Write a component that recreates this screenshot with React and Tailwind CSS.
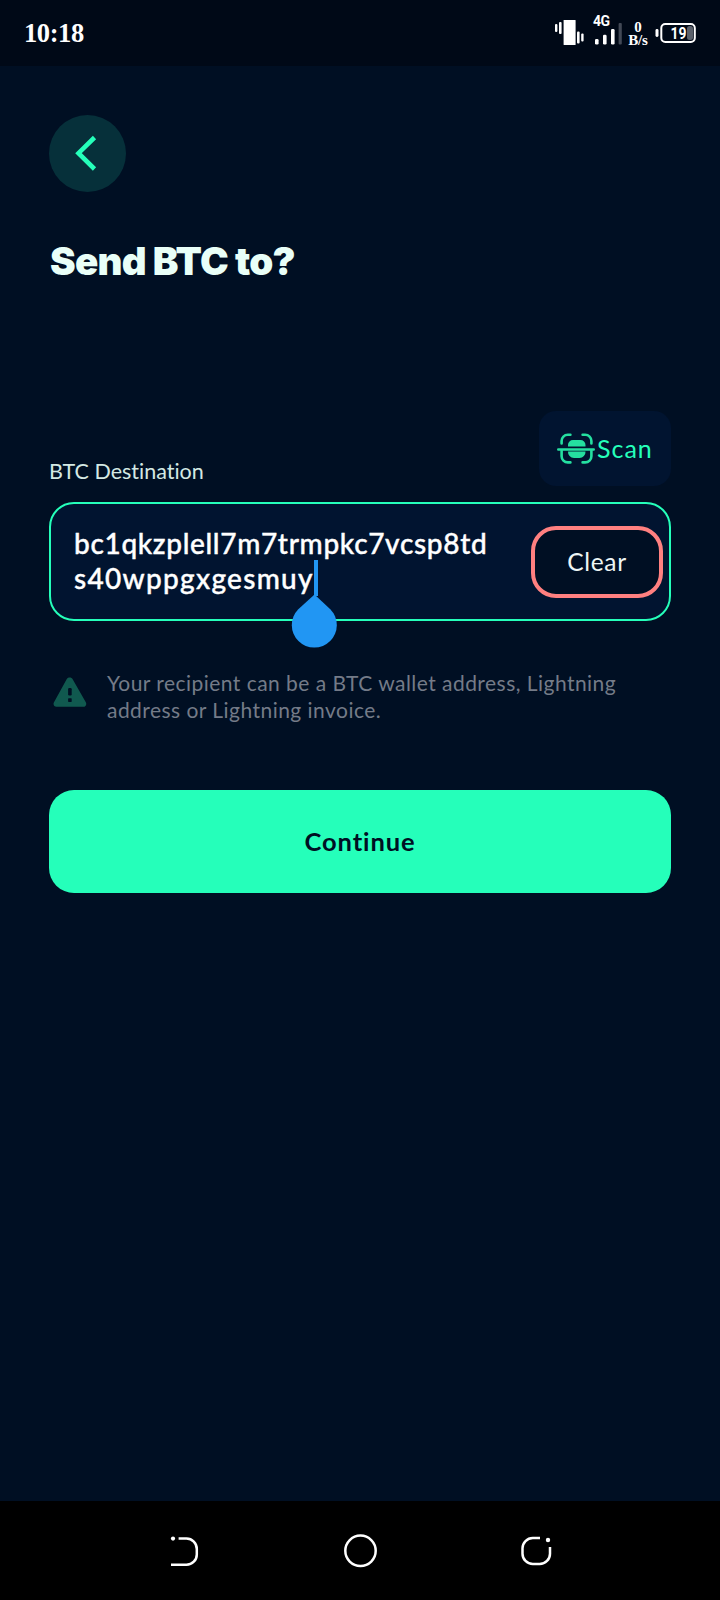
import React from 'react';

function StatusBar() {
  return (
    <header className="flex h-[66px] shrink-0 items-center justify-between bg-[#000917] pr-[24px] pl-[24px] text-white">
      <span className="pb-[1px] font-['Liberation_Serif',serif] text-[26.5px] leading-[30px] font-bold tracking-[-0.4px]">10:18</span>
      <div className="flex h-[66px] items-center">
        <svg className="mr-[8px] h-[26px] w-[30px]" viewBox="0 0 30 26" fill="#fff">
          <rect x="0" y="4" width="2.4" height="8" rx="1" />
          <rect x="4" y="2" width="2.6" height="12" rx="1" />
          <rect x="8.600" y="0" width="12" height="25" rx="0.600" />
          <rect x="22" y="11.500" width="2.600" height="12" rx="1" />
          <rect x="26.200" y="13.500" width="2.400" height="8" rx="1" />
        </svg>
        <div className="mr-[6px] flex h-[36px] w-[29px] flex-col">
          <span className="h-[13px] font-['Roboto',sans-serif] text-[14px] leading-[12px] font-bold tracking-[-0.6px]">4G</span>
          <svg className="h-[17px] w-[29px] shrink-0 overflow-visible" viewBox="0 0 29 17" fill="#fff">
            <rect x="2" y="11" width="3.600" height="5.500" rx="1.300" />
            <rect x="10" y="6.800" width="3.600" height="9.700" rx="1.300" />
            <rect x="18" y="1" width="3.600" height="15.500" rx="1.300" />
            <rect x="25.600" y="-5" width="3.200" height="21.500" rx="1" fill="#424956" />
          </svg>
        </div>
        <div className="mr-[7px] flex w-[20px] flex-col items-center pt-[2px] font-['Liberation_Serif',serif] text-[15px] leading-[13.5px] font-bold tracking-[-0.2px]">
          <span>0</span>
          <span>B/s</span>
        </div>
        <svg className="h-[22px] w-[41px]" viewBox="0 0 41 22">
          <rect x="0.500" y="7" width="3" height="8" rx="1.400" fill="#fff" />
          <rect x="6.300" y="2" width="33.500" height="18" rx="4" fill="none" stroke="#fff" strokeWidth="2" />
          <rect x="32" y="4" width="6" height="14" rx="2.500" fill="#5a606b" />
          <text x="15.500" y="17" fill="#fff" fontFamily="Roboto, sans-serif" fontSize="16.500" fontWeight="700" textLength="16" lengthAdjust="spacingAndGlyphs">19</text>
        </svg>
      </div>
    </header>
  );
}

function ScanIcon() {
  return (
    <svg className="h-[32px] w-[38px] shrink-0" viewBox="0 0 38 32" fill="none" stroke="#25dfa0" strokeWidth="2.600" strokeLinecap="round">
      <path d="M4.600 10.500V8a6.200 6.200 0 0 1 6.200-6.200h2.600M25.600 1.800h2.600A6.200 6.200 0 0 1 34.400 8v2.500M34.400 18v5.200a6.200 6.200 0 0 1-6.200 6.200h-2.600M13.400 29.400h-2.600a6.200 6.200 0 0 1-6.200-6.200V18M1.300 16.500h35.400" />
      <path d="M11 13.500V12a5 5 0 0 1 5-5h7.500a5 5 0 0 1 5 5v1.500zM11 18.500h17.500a6 6 0 0 1-6 6.500H17a6 6 0 0 1-6-6.500z" fill="#25dfa0" stroke="none" />
    </svg>
  );
}

function WarningIcon() {
  return (
    <svg className="h-[32px] w-[34px] shrink-0" viewBox="0 0 34 32">
      <path d="M13.500 2.500c1.400-2.600 4.900-2.600 6.300 0l13 22.800c1.200 2.200-.2 4.500-2.500 4.500H3.500C1.100 29.800-.2 27.500 1 25.300Z" fill="#10594f" />
      <rect x="15.100" y="11" width="3.600" height="7.500" rx="1.200" fill="#000f23" />
      <rect x="15.100" y="21.300" width="3.600" height="3.600" rx="0.600" fill="#000f23" />
    </svg>
  );
}

function NavBar() {
  return (
    <nav className="flex h-[99px] shrink-0 items-center justify-between bg-black pr-[168px] pl-[167px]">
      <svg className="h-[36px] w-[36px]" viewBox="0 0 36 36" fill="none" stroke="#fff" strokeWidth="2.500">
        <circle cx="6" cy="5.600" r="2.100" fill="#fff" stroke="none" />
        <path d="M11.600 5.600H19.500A10.300 10.300 0 0 1 29.800 15.900V21.400A10.300 10.300 0 0 1 19.500 31.700H4" />
      </svg>
      <svg className="h-[36px] w-[36px]" viewBox="0 0 36 36" fill="none" stroke="#fff" strokeWidth="2.500">
        <circle cx="18.500" cy="17.800" r="15.200" />
      </svg>
      <svg className="h-[36px] w-[36px]" viewBox="0 0 36 36" fill="none" stroke="#fff" strokeWidth="2.500">
        <path d="M24 5H16.800A10.300 10.300 0 0 0 6.500 15.300V20.700A10.300 10.300 0 0 0 16.800 31H23.700A10.300 10.300 0 0 0 34 20.700V14" />
        <circle cx="32" cy="7" r="2.200" fill="#fff" stroke="none" />
      </svg>
    </nav>
  );
}

export default function App() {
  return (
    <div className="flex h-[1600px] w-[720px] flex-col overflow-hidden bg-[#000f23] font-['Lato',sans-serif] [font-variant-ligatures:none]">
      <StatusBar />
      <main className="flex flex-1 flex-col px-[49px] pt-[49px]">
        <button className="flex size-[77px] items-center justify-center rounded-full bg-[#06303a]" aria-label="Back">
          <svg className="mr-[6px] mb-[1px] h-[36px] w-[24px]" viewBox="0 0 24 36" fill="none" stroke="#25ffba" strokeWidth="4.600">
            <path d="M21.500 2.500 5.500 18.200 21.500 34" />
          </svg>
        </button>
        <h1 className="mt-[45px] ml-[1px] h-[48px] font-['Inter',sans-serif] text-[38.5px] leading-[48px] font-black tracking-[-0.750px] whitespace-nowrap text-[#e9fff8]">Send BTC to?</h1>

        <div className="mt-[126px] flex h-[75px] items-end justify-between">
          <label className="mb-[1px] text-[21.5px] leading-[28px] font-normal whitespace-nowrap text-[#d4e9e4]">BTC Destination</label>
          <button className="flex h-[75px] w-[132px] items-center rounded-[17px] bg-[#011430] pl-[18px] text-[25px] whitespace-nowrap text-[#25ffba]">
            <ScanIcon />
            <span className="ml-[2px] pt-[1px] tracking-[1px]">Scan</span>
          </button>
        </div>

        <div className="relative mt-[16px] flex h-[119px] items-center justify-between rounded-[25px] border-2 border-[#25ffba] bg-[#011430] pr-[6px] pl-[23px]">
          <div className="pb-[1px] text-[28px] leading-[35px] font-medium whitespace-nowrap text-white [-webkit-text-stroke:0.4px_white]">
            <div className="tracking-[0.670px]">bc1qkzplell7m7trmpkc7vcsp8td</div>
            <div className="tracking-[1.300px]">s40wppgxgesmuy</div>
          </div>
          <button className="flex h-[72px] w-[132px] items-center justify-center rounded-[25px] border-4 border-[#ff8080] bg-[#000f23] pt-[2px] text-[24.5px] tracking-[0.650px] text-[#edf5f5]">Clear</button>
          <svg className="absolute top-[56px] left-[240px] h-[90px] w-[48px]" viewBox="0 0 48 90" fill="#2196f3">
            <rect x="23" y="0" width="4" height="36" />
            <path d="M23.500 34.500 39.300 49.300A22.500 22.500 0 1 1 7.300 49.300Z" />
          </svg>
        </div>

        <div className="mt-[48px] flex h-[56px]">
          <div className="ml-[4px] pt-[8px]"><WarningIcon /></div>
          <p className="ml-[20px] text-[21px] leading-[27px] tracking-[0.460px] whitespace-nowrap text-[#747b88]">
            <span className="block">Your recipient can be a BTC wallet address, Lightning</span>
            <span className="block">address or Lightning invoice.</span>
          </p>
        </div>

        <button className="mt-[65px] h-[103px] rounded-[25px] bg-[#25ffba] text-[25.500px] font-bold tracking-[0.900px] text-[#000f23]">Continue</button>
      </main>
      <NavBar />
    </div>
  );
}
